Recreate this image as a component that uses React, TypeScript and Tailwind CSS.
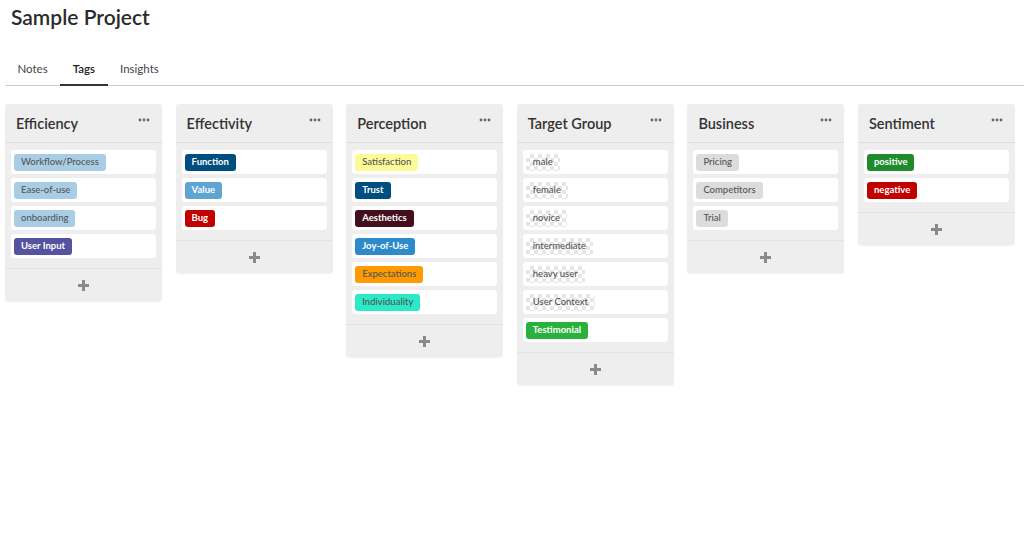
import { useState } from "react";

type Tag = { label: string; bg: string; text: string; checker?: boolean };

const columns: { title: string; tags: Tag[] }[] = [
  {
    title: "Efficiency",
    tags: [
      { label: "Workflow/Process", bg: "bg-[#a9cde5]", text: "text-[#555] font-medium" },
      { label: "Ease-of-use", bg: "bg-[#a9cde5]", text: "text-[#555] font-medium" },
      { label: "onboarding", bg: "bg-[#a9cde5]", text: "text-[#555] font-medium" },
      { label: "User Input", bg: "bg-[#55529f]", text: "text-white font-bold" },
    ],
  },
  {
    title: "Effectivity",
    tags: [
      { label: "Function", bg: "bg-[#004e80]", text: "text-white font-bold" },
      { label: "Value", bg: "bg-[#5fa5d2]", text: "text-white font-bold" },
      { label: "Bug", bg: "bg-[#c10000]", text: "text-white font-bold" },
    ],
  },
  {
    title: "Perception",
    tags: [
      { label: "Satisfaction", bg: "bg-[#fdfa98]", text: "text-[#555] font-medium" },
      { label: "Trust", bg: "bg-[#004e80]", text: "text-white font-bold" },
      { label: "Aesthetics", bg: "bg-[#430f1f]", text: "text-white font-bold" },
      { label: "Joy-of-Use", bg: "bg-[#2e8bca]", text: "text-white font-bold" },
      { label: "Expectations", bg: "bg-[#ff9a00]", text: "text-[#555] font-medium" },
      { label: "Individuality", bg: "bg-[#2ce9c8]", text: "text-[#555] font-medium" },
    ],
  },
  {
    title: "Target Group",
    tags: [
      { label: "male", bg: "", text: "text-[#555] font-medium", checker: true },
      { label: "female", bg: "", text: "text-[#555] font-medium", checker: true },
      { label: "novice", bg: "", text: "text-[#555] font-medium", checker: true },
      { label: "intermediate", bg: "", text: "text-[#555] font-medium", checker: true },
      { label: "heavy user", bg: "", text: "text-[#555] font-medium", checker: true },
      { label: "User Context", bg: "", text: "text-[#555] font-medium", checker: true },
      { label: "Testimonial", bg: "bg-[#29b13c]", text: "text-white font-bold" },
    ],
  },
  {
    title: "Business",
    tags: [
      { label: "Pricing", bg: "bg-[#dcdcdc]", text: "text-[#555] font-medium" },
      { label: "Competitors", bg: "bg-[#dcdcdc]", text: "text-[#555] font-medium" },
      { label: "Trial", bg: "bg-[#dcdcdc]", text: "text-[#555] font-medium" },
    ],
  },
  {
    title: "Sentiment",
    tags: [
      { label: "positive", bg: "bg-[#1f8b2c]", text: "text-white font-bold" },
      { label: "negative", bg: "bg-[#c10000]", text: "text-white font-bold" },
    ],
  },
];

const tabs = ["Notes", "Tags", "Insights"];

const Column = ({ title, tags }: { title: string; tags: Tag[] }) => {
  return (
    <div className="w-[157px] shrink-0 rounded-[3px] bg-[#eeeeee] shadow-[0_1px_1px_rgba(0,0,0,0.06)]">
      {/* Kopf */}
      <div className="flex h-[39px] items-center justify-between border-b border-[#dddddd] pl-[11px] pr-[12px] pt-[1px]">
        <h2 className="text-[14.5px] font-semibold text-[#333]">{title}</h2>
        <svg width="12" height="4" viewBox="0 0 12 4" className="-mt-[7px]">
          <circle cx="2" cy="2" r="1.4" fill="#666" />
          <circle cx="6" cy="2" r="1.4" fill="#666" />
          <circle cx="10" cy="2" r="1.4" fill="#666" />
        </svg>
      </div>
      {/* Tags */}
      <ul className="flex flex-col gap-[4px] px-[6px] pt-[7px] pb-[10px]">
        {tags.map((t) => (
          <li key={t.label} className="flex h-[24px] items-center rounded-[3px] bg-white px-[3px]">
            <span
              className={`flex h-[17px] items-center rounded-[3px] px-[7px] text-[9.5px] ${t.bg} ${t.text} ${
                t.checker
                  ? "bg-[repeating-conic-gradient(#e6e6e6_0_25%,#ffffff_0_50%)] bg-[length:8px_8px]"
                  : ""
              }`}
            >
              {t.label}
            </span>
          </li>
        ))}
      </ul>
      {/* Hinzufügen */}
      <button className="flex h-[33px] w-full items-center justify-center border-t border-[#e3e3e3]">
        <svg width="11" height="11" viewBox="0 0 11 11">
          <rect x="4" y="0" width="3" height="11" fill="#8a8a8a" />
          <rect x="0" y="4" width="11" height="3" fill="#8a8a8a" />
        </svg>
      </button>
    </div>
  );
};

const App = () => {
  const [active, setActive] = useState("Tags");
  return (
    <div className="min-h-[548px] w-[1024px] bg-white font-['Lato',sans-serif] text-[#333]">
      <h1 className="px-[11px] pt-[2px] text-[21px] font-semibold leading-[30px] text-[#2b2b2b]">Sample Project</h1>
      {/* Tabs */}
      <div className="ml-[5px] mt-[24px] flex border-b border-[#cccccc]">
        {tabs.map((tab) => (
          <button
            key={tab}
            onClick={() => setActive(tab)}
            className={`-mb-px flex h-[30px] items-center border-b-2 px-[12.5px] pb-[2px] text-[11.5px] ${
              active === tab ? "border-[#333] font-semibold text-[#222]" : "border-transparent text-[#444]"
            }`}
          >
            {tab}
          </button>
        ))}
      </div>
      {/* Spalten */}
      <div className="flex items-start gap-[13.6px] pl-[5px] pt-[18px]">
        {columns.map((c) => (
          <Column key={c.title} title={c.title} tags={c.tags} />
        ))}
      </div>
    </div>
  );
};

export default App;
